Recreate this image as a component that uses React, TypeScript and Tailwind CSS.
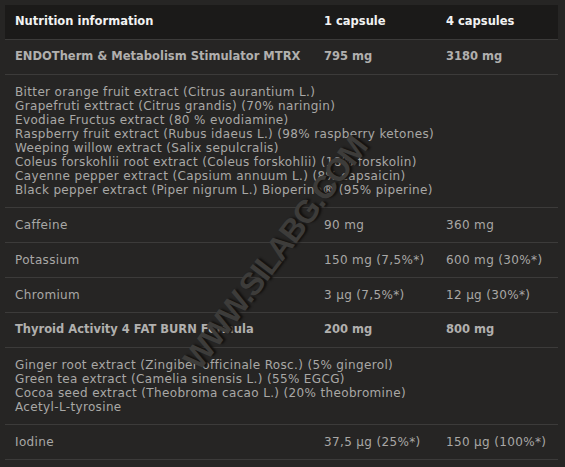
const rows: Array<
  | { kind: 'row'; name: string; a: string; b: string; bold?: boolean }
  | { kind: 'list'; items: string[] }
> = [
  { kind: 'row', name: 'ENDOTherm & Metabolism Stimulator MTRX', a: '795 mg', b: '3180 mg', bold: true },
  {
    kind: 'list',
    items: [
      'Bitter orange fruit extract (Citrus aurantium L.)',
      'Grapefruti exttract (Citrus grandis) (70% naringin)',
      'Evodiae Fructus extract (80 % evodiamine)',
      'Raspberry fruit extract (Rubus idaeus L.) (98% raspberry ketones)',
      'Weeping willow extract (Salix sepulcralis)',
      'Coleus forskohlii root extract (Coleus forskohlii) (18% forskolin)',
      'Cayenne pepper extract (Capsium annuum L.) (8% capsaicin)',
      'Black pepper extract (Piper nigrum L.) Bioperine® (95% piperine)',
    ],
  },
  { kind: 'row', name: 'Caffeine', a: '90 mg', b: '360 mg' },
  { kind: 'row', name: 'Potassium', a: '150 mg (7,5%*)', b: '600 mg (30%*)' },
  { kind: 'row', name: 'Chromium', a: '3 µg (7,5%*)', b: '12 µg (30%*)' },
  { kind: 'row', name: 'Thyroid Activity 4 FAT BURN Formula', a: '200 mg', b: '800 mg', bold: true },
  {
    kind: 'list',
    items: [
      'Ginger root extract (Zingiber officinale Rosc.) (5% gingerol)',
      'Green tea extract (Camelia sinensis L.) (55% EGCG)',
      'Cocoa seed extract (Theobroma cacao L.) (20% theobromine)',
      'Acetyl-L-tyrosine',
    ],
  },
  { kind: 'row', name: 'Iodine', a: '37,5 µg (25%*)', b: '150 µg (100%*)' },
]

export default function App() {
  return (
    <div className="relative w-[565px] h-[467px] overflow-hidden bg-[#262524] pt-[5px] pl-[5px] font-['DejaVu_Sans',Verdana,sans-serif] text-[12px] tracking-[0.35px] text-[#a9a8a6]">
      <div className="w-[553px]">
        <div className="grid grid-cols-[309px_122px_122px] h-[35px] items-center bg-[#1b1a19] border-b border-[#3c3b3a] font-bold text-[11.5px] tracking-normal text-[#f2f2f2]">
          <div className="pl-[10px]">Nutrition information</div>
          <div className="pl-[10px]">1 capsule</div>
          <div className="pl-[10px]">4 capsules</div>
        </div>
        {rows.map((r, i) =>
          r.kind === 'row' ? (
            <div
              key={i}
              className={`grid grid-cols-[309px_122px_122px] h-[35px] items-center border-b border-[#3c3b3a] ${
                r.bold ? 'font-bold text-[11.5px] tracking-normal text-[#b1b0ae]' : ''
              }`}
            >
              <div className="pl-[10px]">{r.name}</div>
              <div className="pl-[10px]">{r.a}</div>
              <div className="pl-[10px]">{r.b}</div>
            </div>
          ) : (
            <div key={i} className="flex flex-col justify-center pl-[10px] leading-[14px] border-b border-[#3c3b3a] py-[10px]">
              {r.items.map((t) => (
                <div key={t}>{t}</div>
              ))}
            </div>
          )
        )}
      </div>
      <div className="absolute left-[275px] top-[253px] -translate-x-1/2 -translate-y-1/2 -rotate-[53deg] whitespace-nowrap font-['Liberation_Sans',Arial,sans-serif] font-bold text-[32px] tracking-[-1.5px] text-[#3d3c3a] [text-shadow:2px_2px_2px_#121110] pointer-events-none">
        WWW.SILABG.COM
      </div>
    </div>
  )
}
